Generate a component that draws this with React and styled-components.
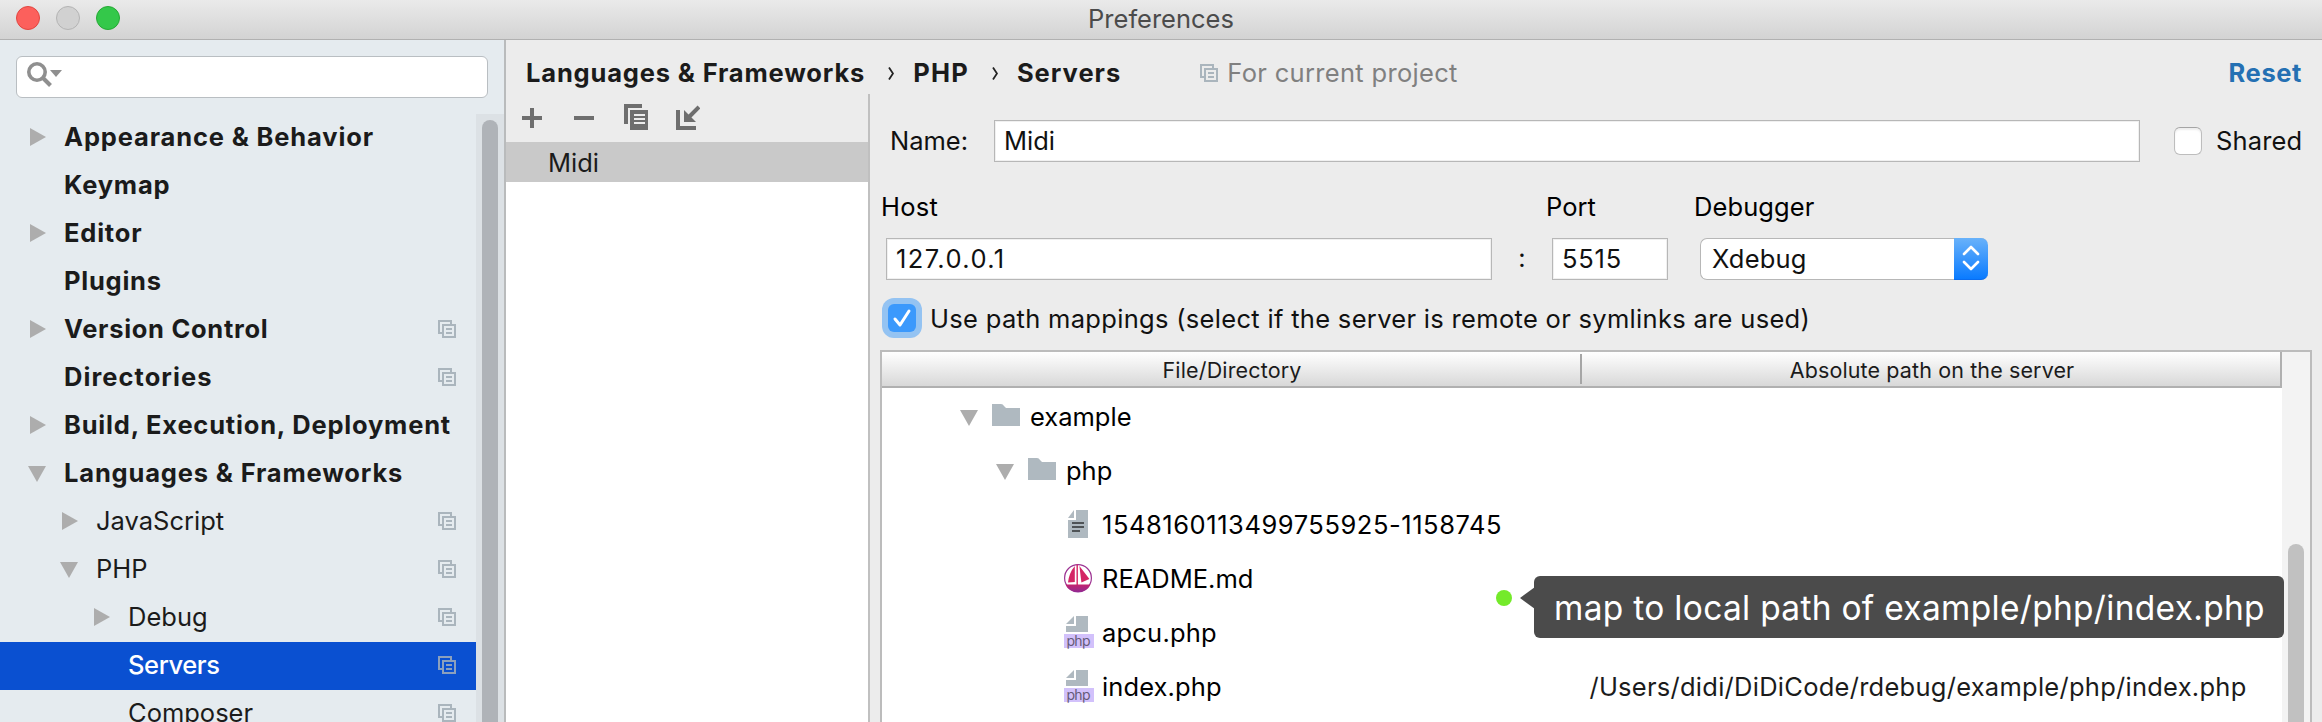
import React from 'react';
import styled, { createGlobalStyle, css } from 'styled-components';

const Global = createGlobalStyle`
  * { box-sizing: border-box; }
  body { margin: 0; overflow: hidden; background: #ececec; }
`;

const Window = styled.div`
  width: 2322px; height: 722px; overflow: hidden; position: relative;
  display: flex; flex-direction: column;
  font: 400 26px/48px Inter, "Liberation Sans", sans-serif;
  color: #1b1b1b; background: #ececec;
`;

const Label = styled.span`
  white-space: pre;
  font-size: ${p => p.$size || 25.5}px;
  font-weight: ${p => p.$weight || (p.$bold ? 700 : 400)};
  letter-spacing: ${p => p.$track || 0}px;
  color: ${p => p.$color || 'inherit'};
`;

const TitleBar = styled.header`
  height: 40px; flex: none; display: flex; align-items: center; position: relative;
  padding: 0 0 2px 16px; gap: 16px;
  background: linear-gradient(#eaeaea, #d3d3d3);
  border-bottom: 1px solid #b1b1b1;
`;
const Light = styled.i`
  width: 24px; height: 24px; border-radius: 50%; margin-top: -1px;
  background: ${p => p.$fill}; border: 1px solid ${p => p.$edge};
`;
const Title = styled.div`
  flex: 1; text-align: center; padding-right: 136px; line-height: 38px; color: #4b4b4b;
`;

const Main = styled.div`flex: 1; display: flex; min-height: 0;`;

const Sidebar = styled.aside`
  width: 506px; flex: none; display: flex; flex-direction: column;
  background: #e5ebef; border-right: 2px solid #b9bbbc;
`;
const Search = styled.div`
  height: 42px; width: 472px; margin: 16px 0 16px 16px; flex: none;
  border: 1px solid #b9bec2; border-radius: 6px; background: #fff; padding: 4px 0 0 9px;
  svg { display: block; }
`;
const TreeArea = styled.div`flex: 1; min-height: 0; display: flex;`;
const Tree = styled.nav`flex: 1; overflow: hidden;`;
const TreeRow = styled.div`
  height: 48px; display: flex; align-items: center; line-height: 46px;
  padding: 0 20px 2px ${p => 28 + p.$level * 32}px;
  ${p => p.$selected && css`background: #0a50d1; color: #fff;`}
`;
const Arrow = styled.svg`flex: none; width: 18px; height: 18px; margin-right: ${p => p.$gap}px; fill: #adadad;`;
const Grow = styled.div`flex: 1; min-width: 0; display: flex;`;
const Track = styled.div`
  width: ${p => p.$w}px; flex: none; padding: ${p => p.$pad};
  background: ${p => p.$bg};
`;
const Thumb = styled.div`
  width: 16px; height: 700px; border-radius: 8px; background: ${p => p.$bg};
`;

const Content = styled.section`flex: 1; min-width: 0; display: flex; flex-direction: column;`;
const Crumbs = styled.div`
  height: 54px; flex: none; display: flex; align-items: center; padding: 12px 20px 0 20px;
`;
const Chevron = styled.svg`width: 6px; height: 13px; flex: none; margin: 0 19px 0 23px;`;
const Pin = styled.svg`width: 18px; height: 18px; flex: none; margin: ${p => p.$m || 0};`;
const Panes = styled.div`flex: 1; min-height: 0; display: flex;`;
const ListPane = styled.div`
  width: 364px; flex: none; border-right: 2px solid #c0c0c0; background: #fff;
`;
const Tools = styled.div`
  height: 48px; background: #ececec; padding: 10px 0 0 14px; display: flex; gap: 28px;
  svg { width: 24px; height: 28px; }
`;
const ListItem = styled.div`height: 40px; line-height: 41px; background: #c9c9c9; padding-left: 42px;`;

const Form = styled.div`flex: 1; min-width: 0; display: flex; flex-direction: column; padding: 0 10px 0 10px; color: #111;`;
const NameRow = styled.div`
  height: 42px; flex: none; margin-top: 26px; display: flex; align-items: center; line-height: 42px; padding-left: 10px;
`;
const Cell = styled.div`width: ${p => p.$w}px; flex: none;`;
const Field = styled.div`
  width: ${p => p.$w}px; height: 42px; flex: none; background: #fff; line-height: 39px; padding-left: 9px;
  border: 1px solid #b7b7b7; box-shadow: inset 0 0 0 1px #f0f0f0;
`;
const Check = styled.div`
  width: 28px; height: 28px; flex: none; border-radius: 6px; margin: 0 14px 0 ${p => (p.$on ? 0 : 34)}px;
  ${p => p.$on
    ? css`background: #3b99fc; box-shadow: 0 0 0 6px #94c3f2;`
    : css`background: #fff; border: 1px solid #bdbdbd; border-top-color: #a5a5a5; box-shadow: inset 0 2px 2px #eee;`}
  svg { display: block; }
`;
const Labels = styled.div`height: 76px; flex: none; display: flex; padding: 21px 0 0 1px; color: #000;`;
const HostRow = styled.div`height: 42px; flex: none; display: flex; line-height: 40px; padding-left: 6px;`;
const Colon = styled.div`width: 60px; text-align: center;`;
const Select = styled.div`
  width: 288px; height: 42px; margin-left: 32px; display: flex; justify-content: space-between;
  background: #fff; border: 1px solid #b7b7b7; border-right: 0; border-radius: 7px; padding-left: 11px; line-height: 39px;
`;
const Stepper = styled.div`
  width: 34px; height: 42px; margin-top: -1px; border-radius: 0 7px 7px 0;
  background: linear-gradient(#69b2fa, #0a7bff); border-bottom: 1px solid #0a6df0;
  svg { display: block; }
`;
const MapRow = styled.div`
  height: 70px; flex: none; display: flex; align-items: center; padding: 6px 0 0 8px; line-height: 44px;
  > span { padding-top: 1px; }
`;

const Table = styled.div`
  flex: 1; min-height: 0; display: flex; border: 2px solid #bcbcbc; border-bottom: 0; background: #fff;
`;
const TableMain = styled.div`flex: 1; min-width: 0;`;
const TableHead = styled.div`
  height: 36px; display: flex; align-items: center; line-height: 30px; text-align: center;
  background: linear-gradient(#fff, #d8d8d8); border-bottom: 2px solid #b0b0b0;
  border-right: 2px solid #b0b0b0; color: #1b1b1b;
`;
const HeadCell = styled.div`
  flex: 1; height: 30px; padding-left: 2px;
  & + & { border-left: 2px solid #a6a6a6; }
`;
const Rows = styled.div`padding-top: 2px;`;
const FileRow = styled.div`
  height: 54px; line-height: 54px; display: flex; align-items: center; color: #000;
`;
const FileCell = styled.div`width: 700px; display: flex; align-items: center; padding-left: ${p => p.$indent}px;`;
const FolderSvg = styled.svg`width: 28px; height: 22px; margin: -4px 10px 0 14px; flex: none;`;
const FileSvg = styled.svg`width: 30px; height: 34px; margin-right: 8px; flex: none;`;

const Callout = styled.div`
  position: absolute; left: 1534px; top: 576px; width: 750px; height: 62px; border-radius: 6px;
  background: #4b4b4b; color: #fff; line-height: 64px; padding-left: 20px;
`;
const Tail = styled.svg`position: absolute; left: -14px; top: 11px; width: 15px; height: 22px;`;
const Dot = styled.i`
  position: absolute; left: 1496px; top: 590px; width: 16px; height: 16px; border-radius: 50%; background: #74ea2a;
`;

const CopyPin = ({ m, color = '#aab5bd' }) => (
  <Pin $m={m} viewBox="0 0 18 18" fill="none" stroke={color} strokeWidth="2">
    <path d="M5 13H1V1h12v4" />
    <path d="M5 5h12v12H5zM8 9h6M8 13h6" />
  </Pin>
);

const Disclosure = ({ open, gap }) => (
  <Arrow $gap={gap} viewBox="0 0 18 18">
    {open ? <path d="M0 2h18L9 18z" /> : <path d="M2 0v18l16-9z" />}
  </Arrow>
);

const Folder = () => (
  <FolderSvg viewBox="0 0 28 22"><path fill="#afb9c0" d="M0 0h9q2 0 3 2l2 2h14v18H0z" /></FolderSvg>
);

const FileIcon = ({ kind }) => (
  <FileSvg viewBox="0 0 30 34">
    {kind === 'text' && (
      <g>
        <path fill="#afb9c0" d="M12 2h12v28H4V12h8zM10 2v8H4z" />
        <path stroke="#4f5356" strokeWidth="2" d="M8 15h12M8 19h12M8 23h8" />
      </g>
    )}
    {kind === 'md' && (
      <g>
        <defs>
          <linearGradient id="sail" x1="0" y1="0" x2="0" y2="1">
            <stop offset="0" stopColor="#c4246f" /><stop offset="1" stopColor="#8f2a94" />
          </linearGradient>
        </defs>
        <circle cx="14" cy="16" r="13.4" fill="#fff" stroke="#9c3292" strokeWidth="1.2" />
        <path fill="url(#sail)" d="M1.4 22.5h25.2a14 14 0 0 1-25.2 0z" />
        <path fill="#d42565" d="M10.8 4v16L4 20.6Q5 11 10.8 4zM15.4 4l10 13-8 3.4zM12.5 2.5h1.4V23h-1.4z" />
      </g>
    )}
    {kind === 'php' && (
      <g>
        <path fill="#afb9c0" d="M12 0h12v16H2v-6h10zM10 0v8H2z" />
        <path fill="#d2c1fb" d="M0 18h30v14H0z" />
        <text x="2.5" y="29.5" fontSize="14" textLength="24" fontFamily="Inter, sans-serif" fill="#655b78">php</text>
      </g>
    )}
  </FileSvg>
);

const tree = [
  { text: 'Appearance & Behavior', level: 0, arrow: 'closed', bold: true, track: 0.85 },
  { text: 'Keymap', level: 0, bold: true, track: 0.8 },
  { text: 'Editor', level: 0, arrow: 'closed', bold: true, track: 0.8 },
  { text: 'Plugins', level: 0, bold: true, track: 0.75 },
  { text: 'Version Control', level: 0, arrow: 'closed', bold: true, pin: true, track: 0.7 },
  { text: 'Directories', level: 0, bold: true, pin: true, track: 1.05 },
  { text: 'Build, Execution, Deployment', level: 0, arrow: 'closed', bold: true, track: 0.8 },
  { text: 'Languages & Frameworks', level: 0, arrow: 'open', bold: true, track: 0.83 },
  { text: 'JavaScript', level: 1, arrow: 'closed', pin: true },
  { text: 'PHP', level: 1, arrow: 'open', pin: true },
  { text: 'Debug', level: 2, arrow: 'closed', pin: true },
  { text: 'Servers', level: 2, pin: true, selected: true, track: -0.4 },
  { text: 'Composer', level: 2, pin: true },
];

const files = [
  { text: 'example', indent: 78, folder: true },
  { text: 'php', indent: 114, folder: true },
  { text: '1548160113499755925-1158745', indent: 182, kind: 'text', track: 0.55 },
  { text: 'README.md', indent: 182, kind: 'md' },
  { text: 'apcu.php', indent: 182, kind: 'php', track: 0.2 },
  { text: 'index.php', indent: 182, kind: 'php', track: 0.1, path: '/Users/didi/DiDiCode/rdebug/example/php/index.php' },
];

export default function App() {
  return (
    <>
      <Global />
      <Window>
        <TitleBar>
          <Light $fill="#fc605c" $edge="#e24640" />
          <Light $fill="#d1d1d1" $edge="#b4b4b4" />
          <Light $fill="#34c84a" $edge="#25a934" />
          <Title><Label>Preferences</Label></Title>
        </TitleBar>
        <Main>
          <Sidebar>
            <Search>
              <svg width="38" height="28" viewBox="0 0 38 28" fill="none">
                <circle cx="11" cy="11" r="8.2" stroke="#8f8f8f" strokeWidth="3.6" />
                <path d="M16.5 16.5l8 8" stroke="#8f8f8f" strokeWidth="4" />
                <path d="M24 9h12l-6 7z" fill="#8f8f8f" />
              </svg>
            </Search>
            <TreeArea>
              <Tree>
                {tree.map(r => (
                  <TreeRow key={r.text} $level={r.level} $selected={r.selected}>
                    {r.arrow ? <Disclosure open={r.arrow === 'open'} gap={18} /> : <Arrow $gap={18} />}
                    <Grow><Label $bold={r.bold} $weight={r.selected ? 500 : 0} $track={r.track}>{r.text}</Label></Grow>
                    {r.pin && <CopyPin color={r.selected ? '#8ba0bd' : undefined} />}
                  </TreeRow>
                ))}
              </Tree>
              <Track $w={28} $pad="6px 6px 0" $bg="#dce1e5"><Thumb $bg="#afb3b8" /></Track>
            </TreeArea>
          </Sidebar>
          <Content>
            <Crumbs>
              <Label $bold $track={0.83}>Languages &amp; Frameworks</Label>
              <Chevron viewBox="0 0 6 13" fill="none" stroke="#222" strokeWidth="1.8"><path d="M1 .5l4 6-4 6" /></Chevron>
              <Label $bold $track={1.2}>PHP</Label>
              <Chevron viewBox="0 0 6 13" fill="none" stroke="#222" strokeWidth="1.8"><path d="M1 .5l4 6-4 6" /></Chevron>
              <Label $bold $track={1}>Servers</Label>
              <CopyPin m="0 9px 0 79px" />
              <Grow><Label $color="#808080" $track={0.32}>For current project</Label></Grow>
              <Label $bold $color="#2470b3" $track={0.6}>Reset</Label>
            </Crumbs>
            <Panes>
              <ListPane>
                <Tools>
                  <svg viewBox="0 0 24 28"><path d="M2 14h20M12 4v20" stroke="#6e6e6e" strokeWidth="4" /></svg>
                  <svg viewBox="0 0 24 28"><path d="M2 14h20" stroke="#6e6e6e" strokeWidth="4" /></svg>
                  <svg viewBox="0 0 24 28"><path fill="#6e6e6e" d="M0 0h18v4H4v16H0z" /><path fill="#6e6e6e" d="M6 6h18v20H6z" /><path d="M10 11h11M10 15h11M10 19h11" stroke="#ececec" strokeWidth="2" /></svg>
                  <svg viewBox="0 0 24 28"><path d="M2 6v18h18" fill="none" stroke="#6e6e6e" strokeWidth="4" /><path d="M23 3L13 13" stroke="#6e6e6e" strokeWidth="4" /><path d="M8 6v12h12z" fill="#6e6e6e" /></svg>
                </Tools>
                <ListItem><Label>Midi</Label></ListItem>
              </ListPane>
              <Form>
                <NameRow>
                  <Cell $w={104}><Label>Name:</Label></Cell>
                  <Field $w={1146}><Label>Midi</Label></Field>
                  <Check />
                  <Label $track={0.15}>Shared</Label>
                </NameRow>
                <Labels>
                  <Cell $w={665}><Label $track={0.3}>Host</Label></Cell>
                  <Cell $w={148}><Label>Port</Label></Cell>
                  <Label $track={0.1}>Debugger</Label>
                </Labels>
                <HostRow>
                  <Field $w={606}><Label $track={1.4}>127.0.0.1</Label></Field>
                  <Colon><Label>:</Label></Colon>
                  <Field $w={116}><Label $track={0.8}>5515</Label></Field>
                  <Select>
                    <Label $track={0.2}>Xdebug</Label>
                    <Stepper>
                      <svg width="34" height="42" fill="none" stroke="#fff" strokeWidth="2.6" strokeLinecap="round" strokeLinejoin="round">
                        <path d="M10 16l7-7 7 7M10 24l7 7 7-7" />
                      </svg>
                    </Stepper>
                  </Select>
                </HostRow>
                <MapRow>
                  <Check $on>
                    <svg width="28" height="28" fill="none" stroke="#fff" strokeWidth="3" strokeLinecap="round" strokeLinejoin="round"><path d="M7 15l5 6 9-14" /></svg>
                  </Check>
                  <Label $track={0.31}>Use path mappings (select if the server is remote or symlinks are used)</Label>
                </MapRow>
                <Table>
                  <TableMain>
                    <TableHead>
                      <HeadCell><Label $size={21.5} $track={0.15}>File/Directory</Label></HeadCell>
                      <HeadCell><Label $size={21.5} $track={0.12}>Absolute path on the server</Label></HeadCell>
                    </TableHead>
                    <Rows>
                      {files.map(f => (
                        <FileRow key={f.text}>
                          <FileCell $indent={f.indent}>
                            {f.folder && <><Disclosure open gap={0} /><Folder /></>}
                            {f.kind && <FileIcon kind={f.kind} />}
                            <Label $track={f.track}>{f.text}</Label>
                          </FileCell>
                          {f.path && <Cell $w={690}><Label $color="#1b1b1b" $track={0.26}>{' ' + f.path}</Label></Cell>}
                        </FileRow>
                      ))}
                    </Rows>
                  </TableMain>
                  <Track $w={28} $pad="192px 0 0 6px" $bg="#f3f3f3"><Thumb $bg="#c1c1c1" /></Track>
                </Table>
              </Form>
            </Panes>
          </Content>
        </Main>
        <Dot />
        <Callout>
          <Tail viewBox="0 0 15 22"><path d="M15 0v22L0 11z" fill="#4b4b4b" /></Tail>
          <Label $size={33.5} $track={0.3}>map to local path of example/php/index.php</Label>
        </Callout>
      </Window>
    </>
  );
}
